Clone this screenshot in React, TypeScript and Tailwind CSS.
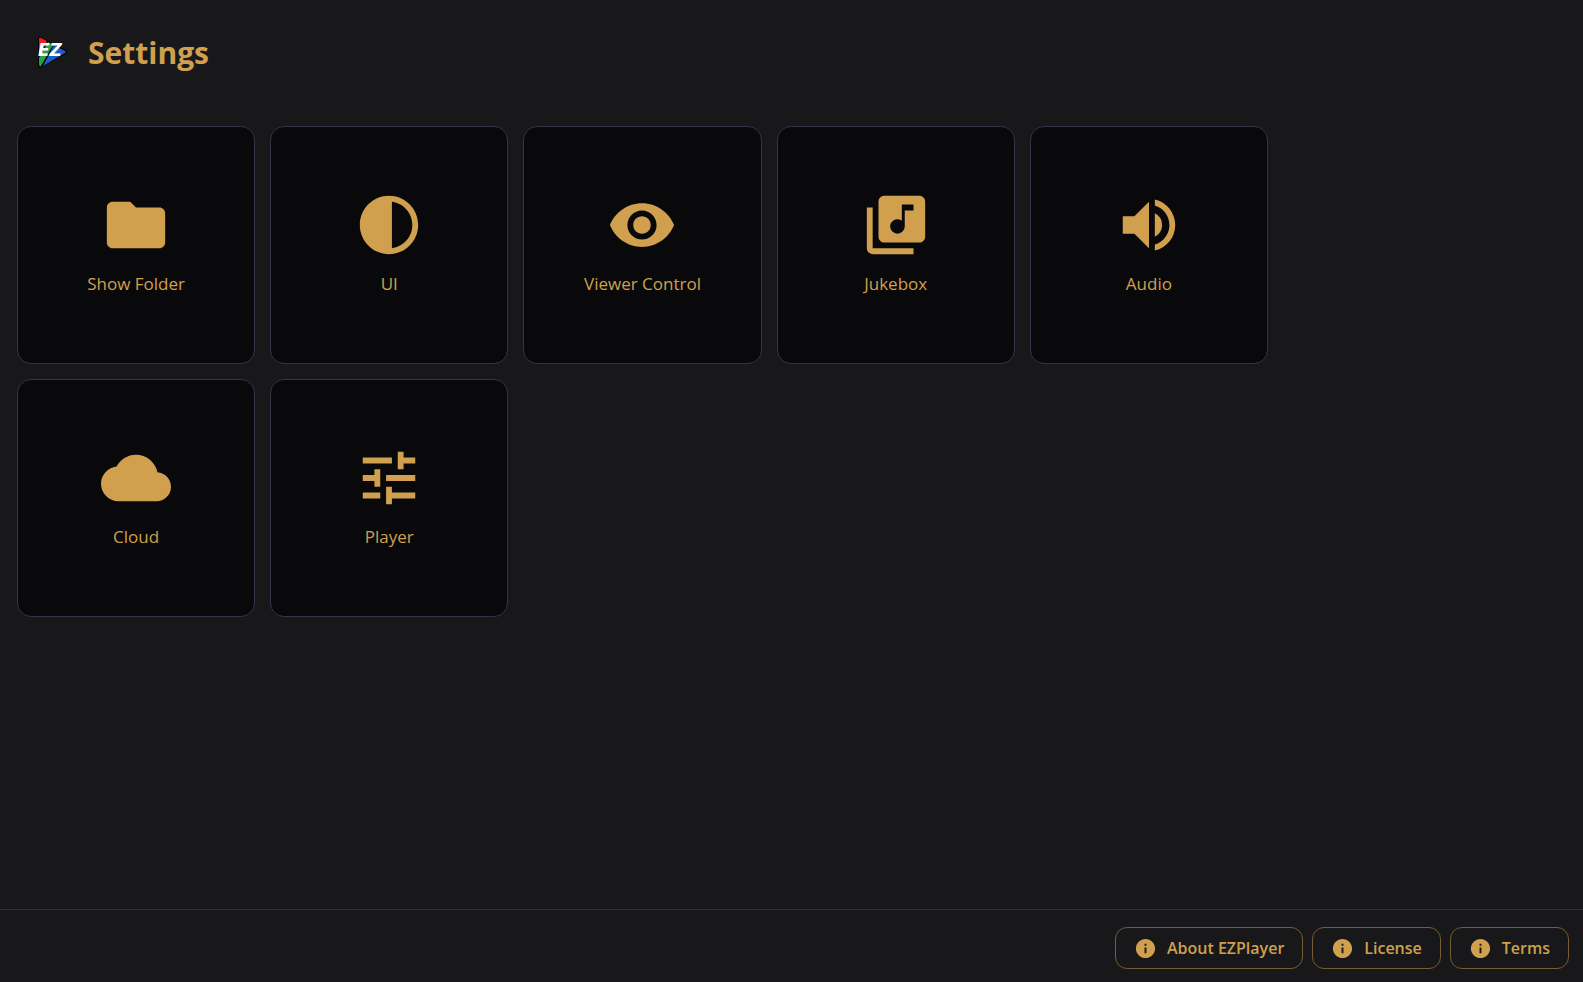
import React from 'react';
import { type IconType } from 'react-icons';
import {
  MdCloud,
  MdContrast,
  MdFolder,
  MdInfo,
  MdLibraryMusic,
  MdTune,
  MdVisibility,
  MdVolumeUp,
} from 'react-icons/md';

interface Tile {
  label: string;
  icon: IconType;
}

const tiles: Tile[] = [
  { label: 'Show Folder', icon: MdFolder },
  { label: 'UI', icon: MdContrast },
  { label: 'Viewer Control', icon: MdVisibility },
  { label: 'Jukebox', icon: MdLibraryMusic },
  { label: 'Audio', icon: MdVolumeUp },
  { label: 'Cloud', icon: MdCloud },
  { label: 'Player', icon: MdTune },
];

const footerLinks = ['About EZPlayer', 'License', 'Terms'];

const Logo: React.FC = () => (
  <svg viewBox="0 0 32 32" className="size-8 shrink-0 overflow-visible" role="img" aria-label="EZPlayer">
    {/* dark outline, then the red, green and blue slices of the play arrow */}
    <path d="M2 1Q2 -1 5 0L30 13Q33 15 30 17L6 30Q2 32 2 28Z" fill="#050505" />
    <path d="M3 2Q3 0 5 1L11 4L3 19Z" fill="#ee1c1c" />
    <path d="M12 5L17 8L5 29Q3 30 3 27V21Z" fill="#27a04b" />
    <path d="M18 8L29 14Q31 15 29 16L7 29Z" fill="#1c5fc4" />
    <text
      x="2"
      y="19"
      fontFamily="'DejaVu Sans', sans-serif"
      fontSize="17"
      fontWeight="700"
      fontStyle="italic"
      fill="#fff"
    >
      EZ
    </text>
  </svg>
);

const SettingsTile: React.FC<Tile> = ({ label, icon: Icon }) => (
  <button
    type="button"
    className="flex aspect-square flex-col items-center justify-center gap-3 rounded-[14px] border border-[#353345] bg-[#09090b] pb-1 transition-colors hover:bg-[#111114]"
  >
    <Icon className="size-[70px]" />
    <span className="text-[17px] leading-6">{label}</span>
  </button>
);

const App: React.FC = () => {
  return (
    <div className="flex min-h-screen flex-col bg-[#18181a] font-['Open_Sans','Noto_Sans',sans-serif] text-[#d0a04e]">
      <header className="flex items-center gap-5 px-9 pt-7 pb-12">
        <Logo />
        <h1 className="text-3xl leading-[50px] font-bold">Settings</h1>
      </header>

      <main className="flex-1 px-[17px]">
        <div className="grid max-w-[1251px] grid-cols-2 gap-[15px] md:grid-cols-3 lg:grid-cols-5">
          {tiles.map((tile) => (
            <SettingsTile key={tile.label} {...tile} />
          ))}
        </div>
      </main>

      <footer className="flex flex-wrap justify-end gap-[9px] border-t border-[#313133] px-3.5 pt-[17px] pb-[13px]">
        {footerLinks.map((label) => (
          <button
            key={label}
            type="button"
            className="flex h-[42px] items-center gap-2.5 rounded-xl border border-[#755c33] px-[18px] text-base font-semibold hover:bg-[#232325]"
          >
            <MdInfo className="size-[23px]" />
            {label}
          </button>
        ))}
      </footer>
    </div>
  );
};

export default App;
